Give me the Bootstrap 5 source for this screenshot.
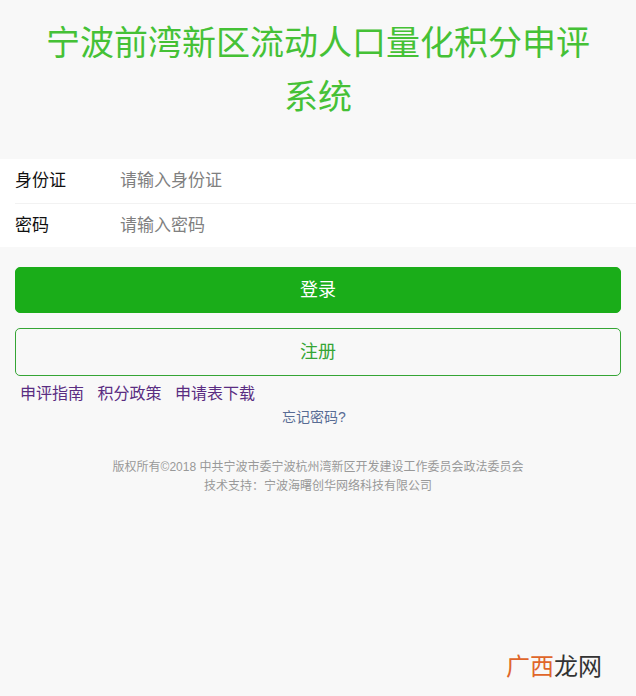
<!DOCTYPE html>
<html lang="zh-CN">
<head>
<meta charset="utf-8">
<title>宁波前湾新区流动人口量化积分申评系统</title>
<link href="https://cdn.jsdelivr.net/npm/bootstrap@5.3.0/dist/css/bootstrap.min.css" rel="stylesheet">
<style>
html,body{height:100%}
body{background:#f8f8f8;font-family:"Liberation Sans","Noto Sans CJK SC",sans-serif;font-size:17px;color:#000;position:relative;overflow:hidden}
.sys-title{color:#45c136;font-size:34px;line-height:54px;font-weight:400;text-align:center;margin:0;padding:16px 40px 35px}
.form-wrap{background:#fff;height:88px}
.form-line{height:44px;padding-left:15px;display:flex;align-items:center}
.line-sep{height:1px;background:#f2f2f2;margin-left:15px}
.form-lab{width:105px;flex:none;font-size:17px;color:#111}
.form-in{border:0;outline:0;background:transparent;flex:1;font-size:17px;padding:0;min-width:0;color:#000}
.form-in::placeholder{color:#808080;opacity:1}
.btn-area{padding:20px 15px 0}
.btn-main{display:block;width:100%;height:46px;background:#1aad19;border:1px solid #1aad19;color:#fff;font-size:18px;border-radius:5px;padding:0}
.btn-main:hover{background:#1aad19;color:#fff}
.btn-reg{display:block;width:100%;height:48px;margin-top:15px;background:transparent;border:1px solid #35a535;color:#35a535;font-size:18px;border-radius:5px;padding:0}
.link-row{padding:7px 20px 0;height:32px;line-height:22px;font-size:16px;gap:13.5px}
.link-row a{color:#5a2d82;text-decoration:none}
.forgot-line{text-align:center;font-size:14px;line-height:18px;height:18px;margin-top:0;padding-right:8px}
.forgot-line a{color:#586c94;text-decoration:none}
.foot-copy{margin-top:32px;text-align:center;color:#999;font-size:12px;line-height:19px}
.water-mark{position:absolute;right:34px;bottom:13px;font-size:24px;line-height:32px;color:#333}
.water-mark span{color:#e0662a}
</style>
</head>
<body>
<h1 class="sys-title">宁波前湾新区流动人口量化积分申评系统</h1>
<form>
<div class="form-wrap">
<div class="form-line"><label class="form-lab" for="idn">身份证</label><input class="form-in" id="idn" type="text" placeholder="请输入身份证"></div>
<div class="line-sep"></div>
<div class="form-line"><label class="form-lab" for="pw">密码</label><input class="form-in" id="pw" type="password" placeholder="请输入密码"></div>
</div>
<div class="btn-area">
<button type="button" class="btn btn-main">登录</button>
<button type="button" class="btn btn-reg">注册</button>
</div>
</form>
<div class="d-flex link-row"><a href="#">申评指南</a><a href="#">积分政策</a><a href="#">申请表下载</a></div>
<div class="forgot-line"><a href="#">忘记密码?</a></div>
<div class="foot-copy">版权所有©2018 中共宁波市委宁波杭州湾新区开发建设工作委员会政法委员会<br>技术支持：宁波海曙创华网络科技有限公司</div>
<div class="water-mark"><span>广西</span>龙网</div>
<script src="https://cdn.jsdelivr.net/npm/bootstrap@5.3.0/dist/js/bootstrap.bundle.min.js"></script>
</body>
</html>
